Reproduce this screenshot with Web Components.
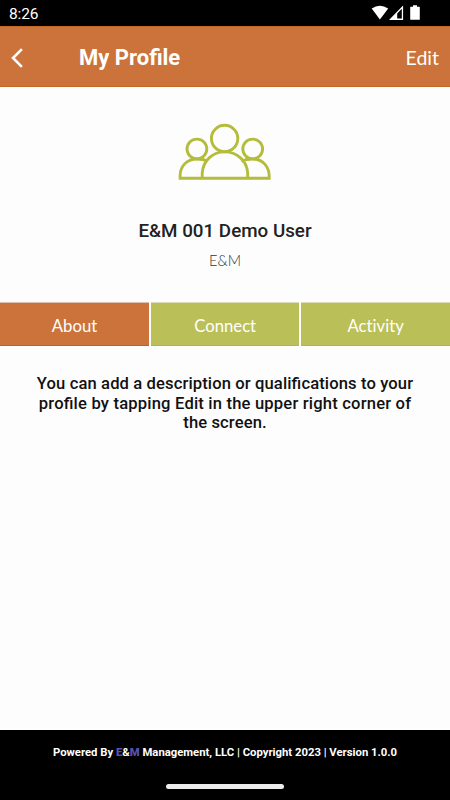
<!DOCTYPE html>
<html lang="en"><head><meta charset="utf-8"><title>My Profile</title>
<style>html,body{margin:0;height:100%;background:#fdfdfd;overflow:hidden}</style></head>
<body><profile-screen></profile-screen>
<script>
const define=(name,html)=>customElements.define(name,class extends HTMLElement{
  constructor(){super();const t=document.createElement('template');t.innerHTML=html;
    this.attachShadow({mode:'open'}).append(t.content.cloneNode(true));}
});
define('status-bar',`<style>
:host{display:flex;height:26px;background:#000;color:#fff;font:15.5px/28px Roboto,sans-serif;box-sizing:border-box;padding-left:9px;justify-content:space-between}
span{letter-spacing:-.15px}svg{display:block;width:80px;height:26px}</style>
<span>8:26</span><svg viewBox="370 0 80 26" fill="#fff"><path d="M371.700 8.400Q379.800 3 388.200 8.400L379.900 19.400Z"/><path d="M389 19.900 403.100 5.600V19.900ZM397.200 18.500H401.800V8.800L397.200 13.600Z" fill-rule="evenodd"/><path d="M413 5.300h4v1.400h2.300q.5 0 .5.500V19.300q0 .5-.5.500h-8.600q-.5 0-.5-.5V7.200q0-.5.5-.5H413Z"/></svg>`);
define('title-bar',`<style>
:host{display:flex;align-items:center;height:61px;box-sizing:border-box;background:#cb733a;border-top:1px solid #c56820;border-bottom:1px solid #c56820;color:#fff;padding:2px 11px 0 10px}
svg{width:14px;height:22px;flex:none}h1{margin:0 0 0 55px;font:700 22px/26px Roboto,sans-serif;flex:1}
.action{font:400 19.500px/24px Lato,sans-serif}</style>
<svg viewBox="0 0 14 22" fill="none" stroke="#fff" stroke-width="2.600"><path d="M11.900 2.200 3 11l8.900 8.800"/></svg><h1><slot></slot></h1><span class="action"><slot name="action"></slot></span>`);
define('user-summary',`<style>
:host{display:flex;flex-direction:column;align-items:center;height:215px}
svg{width:94px;height:58px;margin-top:36px}
h2{margin:38px 0 0;font:500 18.800px/25px Roboto,sans-serif;color:#222}
p{margin:6px 0 0;font:300 14.700px/20px Lato,sans-serif;color:#333}</style>
<svg viewBox="178 123 94 58" fill="none" stroke="#b3bd3b" stroke-width="2.900"><circle cx="224.600" cy="138.500" r="13.200"/><circle cx="196.900" cy="149" r="9.900"/><circle cx="252.700" cy="149" r="9.900"/><path d="M202.200 178.300V173C203.200 160 213 151.900 224.700 151.900S246.800 160 247.700 173V178.300M208 161.200Q203 159 197 159C186 159 180.100 167 180.100 176V178.300H269.200V176C269.200 167 263 159 252.500 159Q246 159 241.300 161.200"/></svg>
<h2><slot></slot></h2><p><slot name="company"></slot></p>`);
define('tab-button',`<style>
:host{display:block;background:#bbbf57;color:#fff;text-align:center;font:16.700px/44px Lato,sans-serif;font-variant-ligatures:none;box-shadow:inset 0 1px #dcddb8,inset 0 -1px #b8b72e;padding-top:2px;height:44px;box-sizing:border-box}
:host([selected]){background:#cb733a;box-shadow:inset 0 1px #dfc0ae,inset 0 -1px #c76010}</style><slot></slot>`);
define('tab-row',`<style>:host{display:grid;grid-template-columns:149px 148px 148.500px;gap:2.200px;height:44px}</style><slot></slot>`);
define('profile-description',`<style>:host{display:block;padding:28px 20px 0;text-align:center;font:500 16.600px/19.500px Roboto,sans-serif;color:#111}
::slotted(span){display:block;font-feature-settings:"liga" 1}</style><slot></slot>`);
define('app-footer',`<style>
:host{display:flex;flex-direction:column;align-items:center;justify-content:space-between;height:70px;background:#000;box-sizing:border-box;padding:14px 0 11px;margin-top:auto;color:#fff;font:700 11.300px/17px Roboto,sans-serif}
b{color:#5552b5}i{width:118.500px;height:4.800px;border-radius:3px;background:#ececec}</style>
<span>Powered By <b>E</b>&amp;<b>M</b> Management, LLC | Copyright 2023 | Version 1.0.0</span><i></i>`);
define('profile-screen',`<style>:host{display:flex;flex-direction:column;width:450px;height:800px;background:#fdfdfd}
.first{letter-spacing:.11px}.second{letter-spacing:.18px}.third{letter-spacing:.1px}</style>
<status-bar></status-bar>
<title-bar>My Profile<span slot="action">Edit</span></title-bar>
<user-summary>E&amp;M 001 Demo User<span slot="company">E&amp;M</span></user-summary>
<tab-row><tab-button selected>About</tab-button><tab-button>Connect</tab-button><tab-button>Activity</tab-button></tab-row>
<profile-description><span class="first">You can add a description or qualifications to your</span><span class="second">profile by tapping Edit in the upper right corner of</span><span class="third">the screen.</span></profile-description>
<app-footer></app-footer>`);
</script></body></html>
